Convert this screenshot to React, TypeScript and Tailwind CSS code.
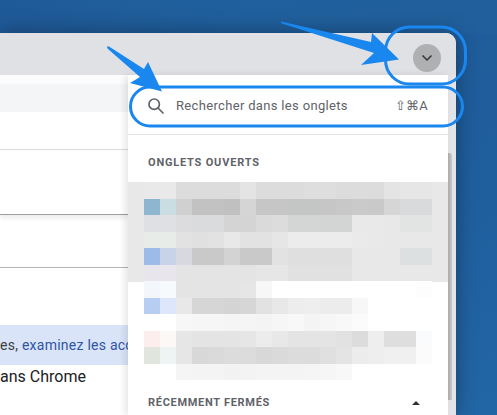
const rows: string[][] = [
  ["#e9e9ea","#e9e9ea","#dcdcdc","#dcdcdc","#dcdcdc","#dcdcdc","#e4e4e4","#dcdcdc","#dcdcdc","#dcdcdc","#dedede","#dedede","#dcdcdc","#dcdcdc","#dcdcdc","#e4e4e4","#e6e6e6","#e6e6e6"],
  ["#8fb6d0","#c9dde2","#d0d0d0","#c2c2c2","#c2c2c2","#c0c0c0","#d5d5d5","#c6c6c6","#c6c6c6","#c4c5c5","#c4c5c5","#c6c6c6","#c8c8c8","#cacaca","#c9c9c9","#d6d6d6","#d8dadb","#d8dadb"],
  ["#dfe0e4","#dfe0e4","#dcdcde","#dadbdc","#dadbdc","#d4d4d4","#d4d4d4","#dadada","#dcdcdc","#d4d5d5","#d4d5d5","#d3d4d4","#d3d4d4","#e9e9e9","#e9e9e9","#e8e8e8","#e2e3e3","#e2e3e3"],
  ["#e8ece8","#e8ece8","#e2e2e2","#e0e0e0","#e2e2e2","#e8e8e8","#e2e2e2","#e2e2e2","#e6e6e6","#ececec","#ececec","#ececec","#ececec","#eaeaea","#e9e9e9","#e8e8e8","#e8e8e8","#e8e8e8"],
  ["#9dbbe8","#c8d3ea","#d8d8e0","#c9c9c9","#c9c9c9","#d3d3d3","#c9c9c9","#c9c9c9","#e2e2e2","#dfdfdf","#dfdfdf","#dfdfdf","#dfdfdf","#e8e8e8","#e8e8e8","#e8e8e8","#dde0e1","#dde0e1"],
  ["#e8e6ec","#e8e6ec","#e4e4e4","#e4e4e4","#e4e4e4","#e4e4e4","#e4e4e4","#e6e6e6","#e6e6e6","#e1e1e1","#e1e1e1","#e1e1e1","#e1e1e1","#e8e8e8","#e8e8e8","#e8e8e8","#e8e8e8","#e8e8e8"],
  ["#f3f6fb","#f7fafc","#e4e4e4","#e4e4e4","#e4e4e4","#e4e4e4","#e6e6e6","#f7f7f7","#ffffff","#ffffff","#ffffff","#ffffff","#ffffff","#ffffff","#ffffff","#ffffff","#ffffff","#fdfdfd"],
  ["#b8cdf2","#dde6fa","#e8e8e8","#d6d6d6","#d6d6d6","#d4d4d4","#d6d6d6","#e2e2e2","#e8e8e8","#ededed","#eeeeee","#ececec","#ececec","#f7f7f7","#ffffff","#ffffff","#ffffff","#ffffff"],
  ["#ffffff","#ffffff","#f7f7f7","#f6f6f6","#f6f6f6","#f5f5f5","#f5f5f5","#f4f4f4","#f6f6f6","#f8f8f8","#f4f4f4","#f6f6f6","#f8f8f8","#fbfbfb","#ffffff","#ffffff","#ffffff","#ffffff"],
  ["#fbeeec","#fbf8f6","#e6e6e6","#e4e4e4","#e4e4e4","#e4e4e4","#e6e6e6","#ececec","#e8e8e8","#e4e4e4","#e4e4e4","#e4e4e4","#e2e2e2","#dcdcdc","#eeeeee","#dedede","#dedede","#f9fbfd"],
  ["#e0e6de","#eef4f4","#e6e6e6","#d8d8d8","#dadada","#dcdcdc","#dcdcdc","#d8d8d8","#dadada","#dcdcdc","#dcdcdc","#e0e0e0","#e4e4e4","#ececec","#eeeeee","#f0f0f0","#f0f0f0","#fbfbfb"],
  ["#ffffff","#ffffff","#f5f5f5","#f4f4f4","#f4f4f4","#f2f2f2","#f3f3f3","#f4f4f4","#f4f4f4","#f4f4f4","#f5f5f5","#f6f6f6","#f8f8f8","#ffffff","#ffffff","#ffffff","#ffffff","#ffffff"],
];

function SearchIcon() {
  return (
    <svg width="18" height="18" viewBox="0 0 18 18" fill="none" stroke="#5f6368" strokeWidth="1.7" strokeLinecap="round">
      <circle cx="7.2" cy="7.2" r="5.2" />
      <path d="M11 11l5 5" />
    </svg>
  );
}

function Annotations() {
  return (
    <svg className="absolute inset-0 z-20" width="497" height="415" viewBox="0 0 497 415" fill="none">
      <rect x="385.5" y="27" width="80" height="57" rx="24" stroke="#1a87ee" strokeWidth="3" />
      <rect x="130.5" y="87" width="332" height="39" rx="19.5" stroke="#1a87ee" strokeWidth="3" />
      <path d="M281 21.5 Q280 22 282 23.5 L374 53 L361 65 L399 59.5 L372 33 L371 42 Z" fill="#1a87ee" />
      <path d="M107 46.5 Q107 48 108 49 L140 77 L130 83 L162 91.5 L148 62 L144 69 L109 46.5 Z" fill="#1a87ee" />
    </svg>
  );
}

export default function App() {
  return (
    <div className="relative w-[497px] h-[415px] overflow-hidden bg-[linear-gradient(180deg,#205c9a_0%,#1f5d9c_30%,#2266a6_100%)] font-['Roboto',sans-serif]">
      <div className="absolute inset-x-0 top-0 h-[33px] bg-[linear-gradient(90deg,#1f5a98,#20609e_50%,#215f9c)]" />
      <div className="relative mt-[33px] flex h-[382px] w-[456px] flex-col overflow-hidden rounded-tr-[10px] bg-[#e3e4e8] shadow-[0_0_22px_rgba(0,0,0,0.35)]">
        <div className="flex h-[42px] shrink-0 items-center justify-end bg-[#dfe1e5] pr-4">
          <div className="flex h-7 w-7 items-center justify-center rounded-full bg-[#afb0b1] mt-[8px] mr-[-1px]">
            <svg width="12" height="8" viewBox="0 0 12 8" fill="none" stroke="#33363a" strokeWidth="1.5">
              <path d="M1.5 1.5 6 6l4.5-4.5" />
            </svg>
          </div>
        </div>
        <div className="flex min-h-0 flex-1">
          <div className="relative flex w-[128px] shrink-0 flex-col overflow-hidden bg-white">
            <div className="h-[37px] shrink-0 bg-[linear-gradient(#fdfdfe_0%,#fbfbfc_25%,#f3f5f7_26%,#f3f5f7_100%)]" />
            <div className="h-[38px] shrink-0 border-b border-[#dcdcdc]" />
            <div className="h-[65px] shrink-0 border-b border-[#9e9e9e] shadow-[0_3px_5px_rgba(0,0,0,0.08)]" />
            <div className="h-[53px] shrink-0 border-b border-[#b4b4b4]" />
            <div className="h-[57px] shrink-0" />
            <div className="flex h-[40px] shrink-0 items-center whitespace-nowrap bg-[#d9e4f8] text-[14px] tracking-[0.25px] text-[#5f6368]">
              <span className="text-[#3c4043]">es,&nbsp;</span>
              <span className="text-[#2f55a4]">examinez les acc</span>
            </div>
            <div className="mt-[1px] whitespace-nowrap text-[16px] leading-[22px] text-[#202124]">ans Chrome</div>
          </div>
          <div className="relative z-10 flex w-[320px] shrink-0 flex-col bg-white shadow-[-3px_0_7px_rgba(0,0,0,0.1)]">
            <div className="flex h-[60px] shrink-0 items-center border-b border-[#e4e4e4] pl-[19px] pr-5 pt-[3px]">
              <SearchIcon />
              <span className="ml-[11px] flex-1 text-[13px] tracking-[0.33px] text-[#5f6368]">Rechercher dans les onglets</span>
              <span className="text-[13px] tracking-[0.2px] text-[#5f6368]">⇧⌘A</span>
            </div>
            <div className="flex h-[47px] shrink-0 items-center pl-5 pt-[9px] text-[11px] font-bold tracking-[0.8px] text-[#5f6368]">ONGLETS OUVERTS</div>
            <div className="h-[198px] shrink-0 bg-[linear-gradient(#e8e8e8_100px,#ffffff_100px)] pl-4">
              <div className="grid w-[288px] grid-cols-[repeat(18,16px)] auto-rows-[16.5px] blur-[0.6px]">
                {rows.flat().map((c, i) => (
                  <div key={i} style={{ backgroundColor: c }} />
                ))}
              </div>
            </div>
            <div className="flex items-center justify-between pl-5 pr-[28px] pt-[15px]">
              <span className="text-[11px] font-bold tracking-[0.7px] text-[#5f6368]">RÉCEMMENT FERMÉS</span>
              <span className="h-0 w-0 border-x-[4px] border-b-[4px] border-x-transparent border-b-[#303134]" />
            </div>
          </div>
          <div className="flex w-2 shrink-0 flex-col bg-[#e3e4e8] pt-[78px]">
            <div className="h-[247px] w-1 rounded-tr-[3px] bg-[linear-gradient(90deg,#adadad,#c9c9c9)]" />
          </div>
        </div>
      </div>
      <Annotations />
    </div>
  );
}
